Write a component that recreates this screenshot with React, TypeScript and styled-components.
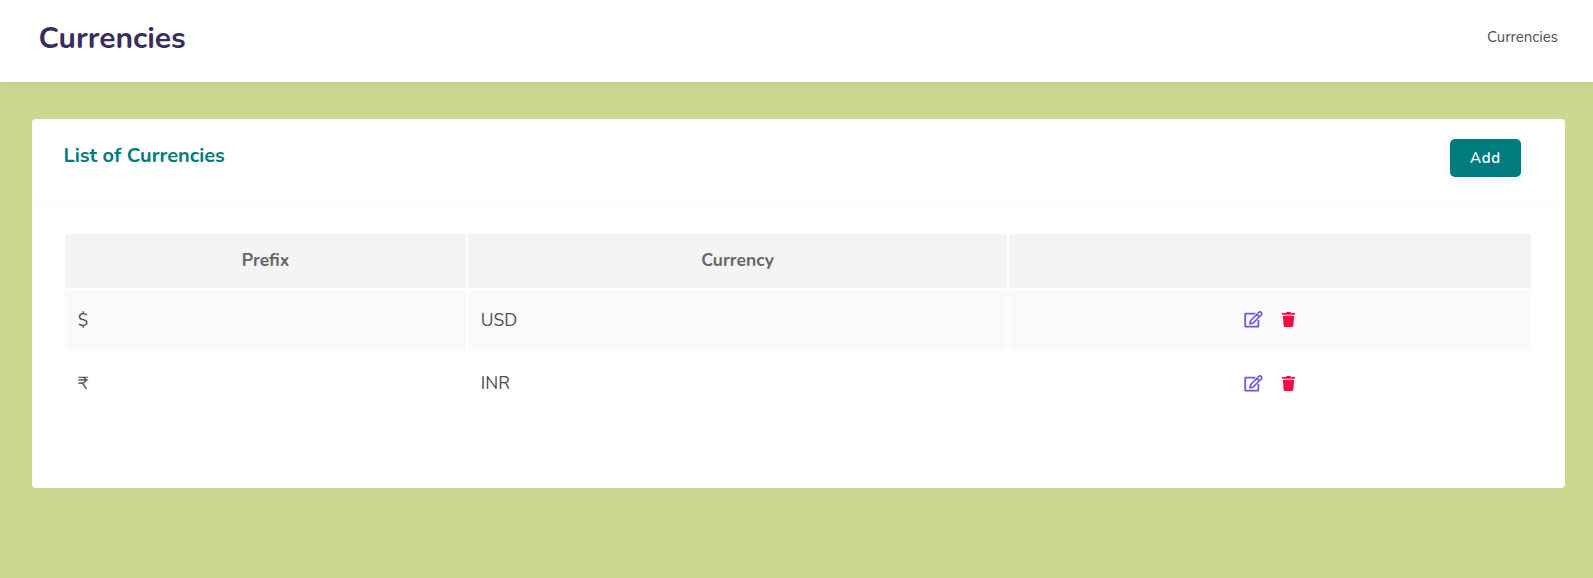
import React from "react";
import styled, { createGlobalStyle } from "styled-components";
import { FaTrash } from "react-icons/fa";

const GlobalStyle = createGlobalStyle`
  * { box-sizing: border-box; }
  body {
    margin: 0;
    background: #cdd78f;
    font-family: Nunito, Lato, "Noto Sans", sans-serif;
    color: #504e52;
  }
`;

const Page = styled.div`
  height: 578px;
  overflow: hidden;
`;

const Header = styled.header`
  height: 82px;
  padding: 0 35px 0 38.5px;
  display: flex;
  justify-content: space-between;
  align-items: flex-start;
  background: #fff;
  box-shadow: 0 0 14px rgba(0, 0, 0, 0.05);
`;

const Title = styled.h1`
  margin: 21px 0 0;
  font-size: 30px;
  line-height: 36px;
  font-weight: 700;
  color: #382d60;
`;

const Crumb = styled.span`
  margin-top: 27px;
  font-size: 15px;
  line-height: 20px;
`;

const Card = styled.section`
  margin: 37px 28px 0 32px;
  height: 369px;
  background: #fff;
  border-radius: 4px;
`;

const CardHeader = styled.div`
  height: 88px;
  padding: 20px 44px 0 31.5px;
  display: flex;
  justify-content: space-between;
  align-items: flex-start;
  border-bottom: 1px solid #f8f8f8;
`;

const CardTitle = styled.h2`
  margin: 5px 0 0;
  font-size: 20px;
  line-height: 24px;
  font-weight: 700;
  color: #007b7e;
`;

const AddButton = styled.button`
  width: 71px;
  height: 38px;
  padding: 0;
  border: 0;
  border-radius: 5px;
  background: #007b7e;
  color: #fff;
  font: inherit;
  font-size: 15px;
  font-weight: 600;
  letter-spacing: 0.7px;
  box-shadow: 0 2px 6px rgba(0, 123, 126, 0.1);
`;

const Table = styled.div`
  margin: 27px 34px 0 33px;
  display: grid;
  grid-template-columns: 401px 539px 522px;
  column-gap: 2px;
  row-gap: 2px;
`;

const HeadCell = styled.div`
  height: 54px;
  padding-bottom: 2px;
  display: flex;
  align-items: center;
  justify-content: center;
  background: #f4f4f4;
  color: #666;
  font-size: 17.5px;
  font-weight: 700;
`;

const Cell = styled.div<{ $striped?: boolean }>`
  height: 61px;
  padding: 0 12.7px 1px;
  display: flex;
  align-items: center;
  background: ${(p) => (p.$striped ? "#fafafa" : "#fff")};
  font-size: 17.5px;
`;

const ActionCell = styled(Cell)`
  padding: 0 15px ${(p) => (p.$striped ? 3 : 1)}px 13px;
  justify-content: center;
  gap: 19px;
`;

const EditSvg = styled.svg`
  width: 19px;
  height: 17px;
  fill: none;
  stroke: #7355ee;
  stroke-width: 1.75;
  stroke-linejoin: round;
`;

const TrashIcon = styled(FaTrash)`
  width: 13px;
  height: 15px;
  color: #ff0846;
`;

const EditIcon = () => (
  <EditSvg viewBox="0 0 19 17">
    <path d="M11.3 2.7H1.2v12.8h13.2V9" />
    <path d="M6 12.8l.7-3.3 8-8c.7-.7 1.8-.7 2.5 0s.7 1.8 0 2.5l-8 8zM12.8 3.4l2.5 2.5" />
  </EditSvg>
);

const currencies = [
  { prefix: "$", name: "USD" },
  { prefix: "₹", name: "INR" },
];

export default function App() {
  return (
    <Page>
      <GlobalStyle />
      <Header>
        <Title>Currencies</Title>
        <Crumb>Currencies</Crumb>
      </Header>
      <Card>
        <CardHeader>
          <CardTitle>List of Currencies</CardTitle>
          <AddButton>Add</AddButton>
        </CardHeader>
        <Table>
          <HeadCell>Prefix</HeadCell>
          <HeadCell>Currency</HeadCell>
          <HeadCell />
          {currencies.map((c, i) => (
            <React.Fragment key={c.name}>
              <Cell $striped={i % 2 === 0}>{c.prefix}</Cell>
              <Cell $striped={i % 2 === 0}>{c.name}</Cell>
              <ActionCell $striped={i % 2 === 0}>
                <EditIcon />
                <TrashIcon />
              </ActionCell>
            </React.Fragment>
          ))}
        </Table>
      </Card>
    </Page>
  );
}
